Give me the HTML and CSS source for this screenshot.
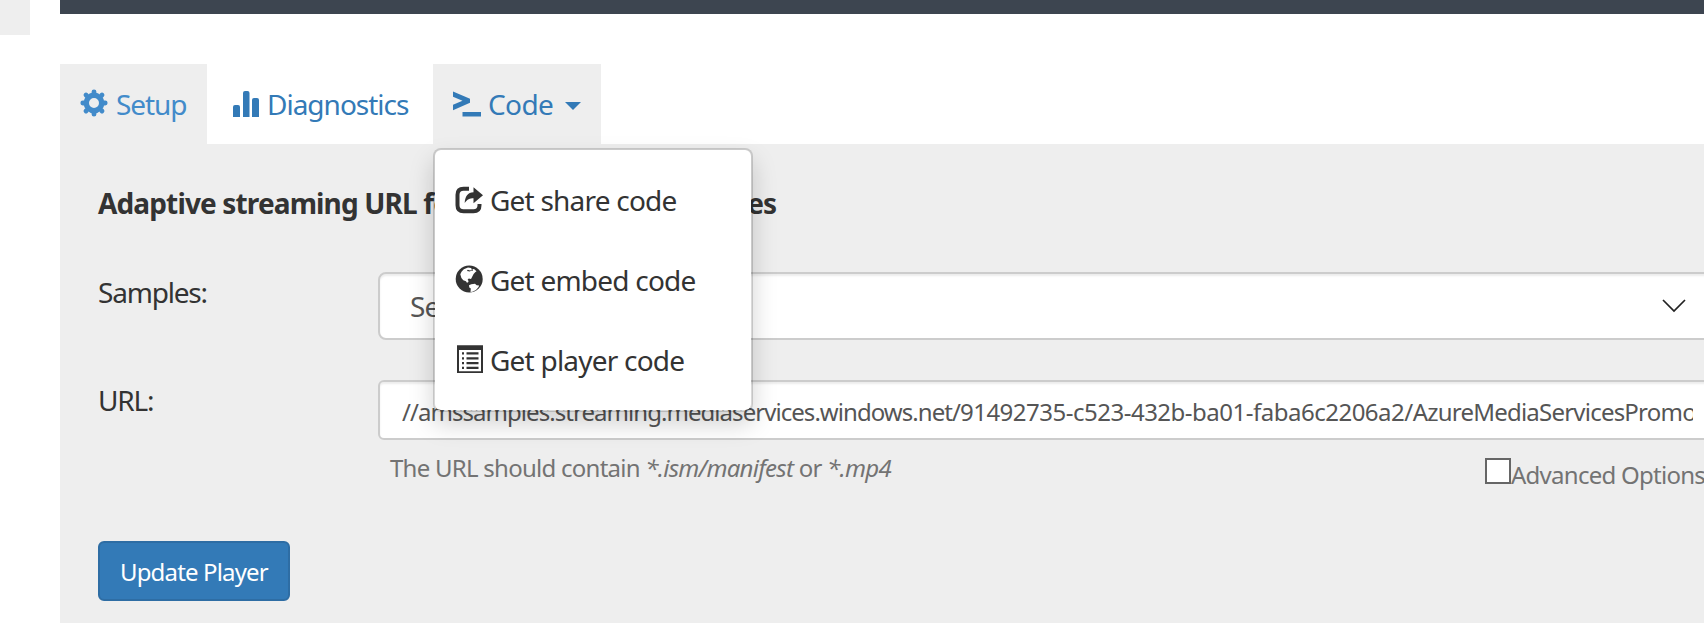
FILE: index.html
```
<!DOCTYPE html>
<html lang="en">
<head>
<meta charset="utf-8">
<title>Player setup</title>
<link rel="stylesheet" href="styles.css">
</head>
<body>
<div class="page">
  <aside class="side"></aside>
  <main class="main">
    <div class="player-bar"></div>
    <nav class="tabs">
      <a class="tab tab-active">
        <svg class="icon" viewBox="0 0 28 28"><circle cx="14" cy="14" r="7.700" fill="none" stroke="currentColor" stroke-width="5.400"/><path d="M14 4V2.800M14 24v1.200M4 14H2.800M24 14h1.200M6.500 6.500l-.5-.5M21.500 21.500l.5.5M6.500 21.500l-.5.5M21.500 6.500l.5-.5" stroke="currentColor" stroke-width="4.800" stroke-linecap="round"/></svg>
        <span class="t-setup">Setup</span>
      </a>
      <a class="tab tab-diag">
        <svg class="icon" viewBox="0 0 28 28"><path d="M1 28V18q0-2 2-2h3q2 0 2 2v10zM11 28V4q0-2 2-2h2.500q2 0 2 2v24zM20 28V11q0-2 2-2h3q2 0 2 2v17z" fill="currentColor"/></svg>
        <span class="t-diag">Diagnostics</span>
      </a>
      <div class="tab tab-open">
        <svg class="icon" viewBox="0 0 28 28"><path d="M0 2.500 17 9.800v3.900L0 21.200v-5.400l9.500-4L0 7.800zM9.500 23H28v4.500H9.500z" fill="currentColor"/></svg>
        <span class="t-code">Code</span>
        <i class="caret"></i>
        <div class="menu">
          <a class="item">
            <svg class="icon icon-share" viewBox="0 0 28 28"><path d="M14 2.700H8.500q-6 0-6 6v10.500q0 6 6 6h10q6 0 6-6V18" fill="none" stroke="currentColor" stroke-width="4"/><path d="M28 9.300 18.500 1.200v5C12.800 6.400 10 10.500 9.700 17c2.600-3.700 5-4.700 8.800-4.700v5z" fill="currentColor"/></svg>
            <span class="t-item">Get share code</span>
          </a>
          <a class="item">
            <svg class="icon" viewBox="0 0 28 28"><circle cx="14.200" cy="14" r="13.500" fill="currentColor"/><path d="M8.800 4.300 13 2.600l3 .3 1 1.500-2 1-2.200-.7-.9 1.400 3.100.3 1-.8 1.900.5-.5-1.900 1.600-.2 2.500 2.300-1.300.9-1.600 1.700-1.800 3.500-.8 1.500-2.200-.3-1.200 1.200 1 1.100-.6 1.500-1.300.2-.7-1.300-2.700-1.100-1.900-2.200-1.100-3.700 1.200-2.500z" fill="#fff"/><path d="m14 20.300 2.300-1.100 3.700-.4 1.700 1.400 2.400.4-.5 1.500-2.600 3-3.600 1.700-1.900.1.300-3.400-1.500-1z" fill="#fff"/></svg>
            <span class="t-item">Get embed code</span>
          </a>
          <a class="item">
            <svg class="icon" viewBox="0 0 28 28"><path fill-rule="evenodd" d="M2 .3h26v28H2zM4 5v21.300h22V5z" fill="currentColor"/><path d="M7 8.400h2M7 13.300h2M7 18.200h2M7 22.900h2M11.500 8.400h12M11.500 13.300h12M11.500 18.200h12M11.500 22.900h12" stroke="currentColor" stroke-width="2.300"/></svg>
            <span class="t-item">Get player code</span>
          </a>
        </div>
      </div>
    </nav>
    <section class="panel">
      <h2 class="heading">Adaptive streaming URL f<span class="spread">or Azure Media Servic</span>es</h2>
      <div class="row row-samples">
        <div class="label">Samples:</div>
        <div class="select"><span class="t-select">Select</span><svg class="chevron" viewBox="0 0 24 14"><path d="m1 1 11 11L23 1" fill="none" stroke="#222" stroke-width="1.700"/></svg></div>
      </div>
      <div class="row row-url">
        <div class="label">URL:</div>
        <div class="input"><div class="value">//amssamples.streaming.mediaservices.windows.net/<span class="path">91492735-c523-432b-ba01-faba6c2206a2/</span><span class="file">AzureMediaServicesPromo</span></div></div>
      </div>
      <div class="help">
        <span class="hint">The URL should contain <em>*.ism/manifest</em> or <em>*.mp4</em></span>
        <div class="advanced"><i class="box"></i><span>Advanced Options</span></div>
      </div>
      <button class="update">Update Player</button>
    </section>
  </main>
</div>
</body>
</html>
```
FILE: styles.css
```
* { box-sizing: border-box; }
body {
  margin: 0;
  height: 623px;
  overflow: hidden;
  background: #fff;
  color: #333;
  font: 28px/40px "Noto Sans", "Open Sans", sans-serif;
}
.page { display: flex; width: 1760px; height: 623px; overflow: hidden; }
.side { width: 30px; height: 35px; margin-right: 30px; background: #eee; }
.main { flex: 1; display: flex; flex-direction: column; }
.player-bar { height: 14px; margin-bottom: 50px; background: #3d4550; }
.tabs { display: flex; height: 80px; }
.tab { display: flex; align-items: center; height: 80px; padding: 0 20px; color: #337ab7; white-space: nowrap; }
.icon { flex: none; width: 28px; height: 28px; margin-top: -2px; }
.icon-share { margin-top: 0; }
.tab .icon { margin-right: 7px; }
.tab-active { width: 147px; background: #eee; color: #428bca; }
.t-setup { padding-left: 1px; letter-spacing: -1.1px; }
.tab-diag { width: 226px; padding-left: 25px; }
.t-diag { letter-spacing: -1px; }
.tab-open { position: relative; width: 168px; background: #eee; }
.t-code { letter-spacing: -.6px; }
.caret { margin: 4px 0 0 12px; border: 8px solid transparent; border-top-color: currentColor; border-bottom: 0; }
.menu {
  position: absolute;
  z-index: 2;
  top: 84px;
  left: 0;
  width: 320px;
  padding: 10px 0;
  border: 2px solid rgba(0, 0, 0, .15);
  border-radius: 8px;
  background: #fff;
  background-clip: padding-box;
  box-shadow: 0 12px 24px rgba(0, 0, 0, .175);
  color: #333;
}
.item { display: flex; align-items: center; height: 80px; padding-left: 20px; }
.t-item { letter-spacing: -.78px; }
.panel { flex: 1; padding: 39px 0 0 38px; background: #eee; }
.heading { margin: 0 0 49px; font-size: 28px; line-height: 40px; font-weight: 700; letter-spacing: -.86px; white-space: nowrap; }
.spread { letter-spacing: .6px; }
.row { display: flex; }
.label { width: 280px; letter-spacing: -1.2px; }
.row-samples { height: 108px; }
.row-url { height: 60px; }
.select, .input { width: 1339px; border: 2px solid #ccc; background: #fff; color: #555; box-shadow: inset 0 2px 2px rgba(0, 0, 0, .075); }
.select { display: flex; justify-content: space-between; align-items: center; height: 68px; padding: 0 29px 0 30px; border-radius: 8px; }
.t-select { letter-spacing: -.8px; }
.chevron { width: 24px; height: 14px; }
.input { height: 60px; padding: 8px 22px 4px; border-radius: 6px; font-size: 24px; line-height: 44px; letter-spacing: -.95px; }
.value { overflow: hidden; white-space: nowrap; }
.path { letter-spacing: -.5px; }
.file { letter-spacing: -.78px; }
.help { display: flex; height: 101px; padding: 8px 0 0 292px; color: #737373; font-size: 24px; letter-spacing: -.74px; white-space: nowrap; }
.hint { width: 1095px; }
.advanced { display: flex; margin-top: 7px; }
.box { width: 26px; height: 26px; margin-top: 3px; border: 2px solid #666; background: #fff; }
.update { display: block; width: 192px; height: 60px; padding: 2px 20px 0; border: 2px solid #2e6da4; border-radius: 6px; background: #337ab7; color: #fff; font: 24px/40px "Noto Sans", "Open Sans", sans-serif; letter-spacing: -.85px; text-align: left; white-space: nowrap; }
```
